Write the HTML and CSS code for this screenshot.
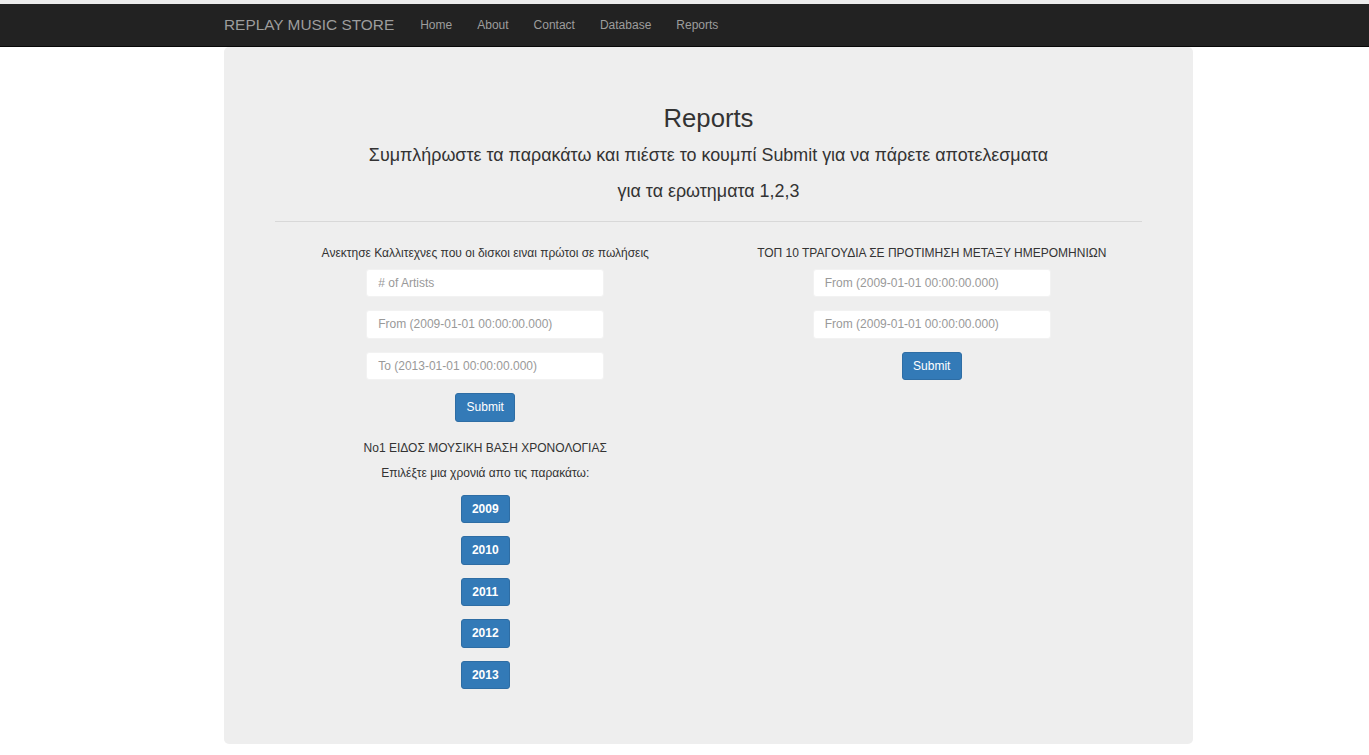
FILE: index.html
```html
<!DOCTYPE html>
<html lang="el">
<head>
<meta charset="utf-8">
<title>Reports - Replay Music Store</title>
<link rel="stylesheet" href="styles.css">
</head>
<body>
<div class="topstrip"></div>
<nav class="navbar">
  <div class="nav-inner">
    <a class="brand" href="#">REPLAY MUSIC STORE</a>
    <ul class="nav-links">
      <li><a href="#">Home</a></li>
      <li><a href="#">About</a></li>
      <li><a href="#">Contact</a></li>
      <li><a href="#">Database</a></li>
      <li><a href="#">Reports</a></li>
    </ul>
  </div>
</nav>
<main class="jumbotron">
  <h2 class="title">Reports</h2>
  <p class="lead">Συμπλήρωστε τα παρακάτω και πιέστε το κουμπί Submit για να πάρετε αποτελεσματα</p>
  <p class="lead">για τα ερωτηματα 1,2,3</p>
  <hr class="divider">
  <div class="row">
    <section class="col">
      <p class="col-heading">Ανεκτησε Καλλιτεχνες που οι δισκοι ειναι πρώτοι σε πωλήσεις</p>
      <div class="stack">
        <input class="field" type="text" placeholder="# of Artists">
        <input class="field" type="text" placeholder="From (2009-01-01 00:00:00.000)">
        <input class="field" type="text" placeholder="To (2013-01-01 00:00:00.000)">
        <button class="btn" type="button">Submit</button>
      </div>
      <p class="col-heading genre-heading">No1 ΕΙΔΟΣ ΜΟΥΣΙΚΗ ΒΑΣΗ ΧΡΟΝΟΛΟΓΙΑΣ</p>
      <p class="col-heading choose">Επιλέξτε μια χρονιά απο τις παρακάτω:</p>
      <div class="stack years">
        <button class="btn btn-year" type="button">2009</button>
        <button class="btn btn-year" type="button">2010</button>
        <button class="btn btn-year" type="button">2011</button>
        <button class="btn btn-year" type="button">2012</button>
        <button class="btn btn-year" type="button">2013</button>
      </div>
    </section>
    <section class="col">
      <p class="col-heading">ΤΟΠ 10 ΤΡΑΓΟΥΔΙΑ ΣΕ ΠΡΟΤΙΜΗΣΗ ΜΕΤΑΞΥ ΗΜΕΡΟΜΗΝΙΩΝ</p>
      <div class="stack">
        <input class="field" type="text" placeholder="From (2009-01-01 00:00:00.000)">
        <input class="field" type="text" placeholder="From (2009-01-01 00:00:00.000)">
        <button class="btn" type="button">Submit</button>
      </div>
    </section>
  </div>
</main>
</body>
</html>
```
FILE: styles.css
```css
* { box-sizing: border-box; }

body {
  margin: 0;
  background: #fff;
  color: #333;
  font-family: "Liberation Sans", Arial, sans-serif;
  font-size: 12px;
  line-height: 17px;
}

.topstrip {
  height: 4px;
  background: #ececec;
}

.navbar {
  height: 43px;
  background: #222;
  border-bottom: 1px solid #080808;
}

.nav-inner {
  margin-left: 224px;
  height: 42px;
  display: flex;
  align-items: center;
}

.brand {
  color: #9d9d9d;
  text-decoration: none;
  font-size: 15.4px;
  line-height: 42px;
}

.nav-links {
  list-style: none;
  margin: 0 0 0 26px;
  padding: 0;
  display: flex;
  gap: 25px;
}

.nav-links a {
  color: #9d9d9d;
  text-decoration: none;
  font-size: 12px;
  line-height: 42px;
}

.jumbotron {
  margin-left: 224px;
  width: 969px;
  height: 697px;
  background: #eee;
  border-radius: 5px;
  padding: 51px 51px 0;
}

.title {
  margin: 6px 0 0;
  font-size: 25.7px;
  font-weight: 400;
  line-height: 28px;
  text-align: center;
}

.lead {
  margin: 0;
  font-size: 17.9px;
  line-height: 36px;
  text-align: center;
}

.lead:first-of-type { margin-top: 5px; }

.divider {
  margin: 12px 0 0;
  border: 0;
  border-top: 1px solid #d8d8d8;
  height: 0;
}

.row {
  display: grid;
  grid-template-columns: 1fr 1fr;
  margin: 0 -13px;
}

.col {
  display: flex;
  flex-direction: column;
  align-items: center;
}

.col-heading {
  margin: 23px 0 0;
  text-align: center;
}

.stack {
  display: flex;
  flex-direction: column;
  align-items: center;
  gap: 13px;
  margin-top: 6.5px;
}

.field {
  width: 238px;
  height: 28.5px;
  padding: 0 11px;
  background: #fff;
  border: 1px solid #f2f2f2;
  border-radius: 3px;
  font-family: inherit;
  font-size: 12px;
  color: #555;
}

.field::placeholder { color: #999; }

.btn {
  height: 28.5px;
  padding: 0 10.3px;
  background: #337ab7;
  border: 1px solid #2e6da4;
  border-radius: 3px;
  color: #fff;
  font-family: inherit;
  font-size: 12px;
}

.btn-year { font-weight: 700; }

.genre-heading { margin-top: 18.5px; }

.choose { margin-top: 8px; }

.years { margin-top: 12.5px; }
```
